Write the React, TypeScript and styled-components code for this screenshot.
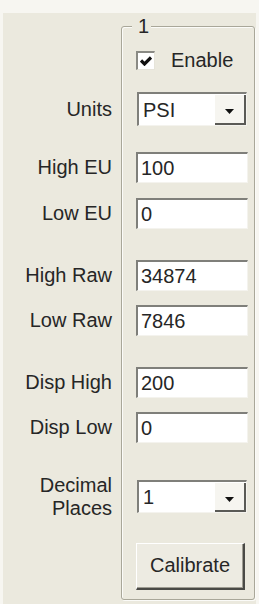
import React from "react";
import styled, { createGlobalStyle } from "styled-components";

const Global = createGlobalStyle`
  html, body { margin: 0; padding: 0; background: #f7f6f1; }
  body { font-family: "Liberation Sans", Arial, sans-serif; }
`;

const Panel = styled.div`
  margin: 13px 0 0 3px;
  width: 253px;
  height: 591px;
  box-sizing: border-box;
  padding-top: 13px;
  background: #ebe9de;
  display: flex;
  align-items: flex-start;
  font-family: "Liberation Sans", Arial, sans-serif;
  font-size: 20px;
  color: #262626;
`;

const LabelColumn = styled.div`
  width: 118px;
  padding-top: 1px;
  display: flex;
  flex-direction: column;
`;

const Frame = styled.div`
  position: relative;
  width: 134px;
  box-sizing: border-box;
  border: 1px solid #a9a799;
  border-radius: 3px;
  box-shadow: inset 1px 1px 0 #fbfbf8, 1px 1px 0 #fbfbf8;
  padding: 0 0 9px 14px;
  display: flex;
  flex-direction: column;
`;

const Legend = styled.span`
  position: absolute;
  left: 10px;
  top: -13px;
  padding: 0 2px 0 6px;
  background: #ebe9de;
  line-height: 24px;
`;

const Row = styled.div<{ $gap: number; $h: number }>`
  margin-top: ${(p) => p.$gap}px;
  height: ${(p) => p.$h}px;
  display: flex;
  align-items: center;
`;

const LabelRow = styled(Row)`
  justify-content: flex-end;
  padding-right: 9px;
  text-align: right;
  white-space: pre-line;
  line-height: 23px;
`;

const CheckRow = styled.label`
  display: flex;
  align-items: center;
  gap: 16px;
  margin-left: 0px;
`;

const CheckBox = styled.span`
  width: 19px;
  height: 19px;
  box-sizing: border-box;
  background: #fff;
  border-top: 2px solid #8a8a84;
  border-left: 2px solid #8a8a84;
  border-right: 1px solid #e6e4da;
  border-bottom: 1px solid #e6e4da;
  display: flex;
  align-items: center;
  justify-content: center;
`;

const TextBox = styled.div`
  width: 112px;
  height: 31px;
  box-sizing: border-box;
  background: #fff;
  border-top: 2px solid #7f7f7a;
  border-left: 2px solid #7f7f7a;
  border-right: 1px solid #f4f3ee;
  border-bottom: 1px solid #f4f3ee;
  display: flex;
  align-items: center;
  padding-left: 3px;
  line-height: 1;
`;

const Combo = styled(TextBox)<{ $h: number }>`
  width: 110px;
  height: ${(p) => p.$h}px;
  margin-left: 1px;
  padding-left: 4px;
  justify-content: space-between;
  padding-right: 0;
  padding-bottom: 0;
  align-items: stretch;
`;

const ComboText = styled.span`
  display: flex;
  align-items: center;
`;

const DropButton = styled.span`
  width: 31px;
  margin: 1px 0 0 0;
  box-sizing: border-box;
  background: #f6f5f0;
  border-right: 2px solid #5a5a56;
  border-bottom: 2px solid #5a5a56;
  display: flex;
  align-items: center;
  justify-content: center;
  padding-top: 5px;
`;

const Button = styled.button`
  width: 109px;
  height: 47px;
  box-sizing: border-box;
  background: #edebe2;
  font: inherit;
  color: #262626;
  border-top: 1px solid #ffffff;
  border-left: 1px solid #ffffff;
  border-right: 2px solid #4a4a46;
  border-bottom: 2px solid #4a4a46;
  box-shadow: inset -1px -1px 0 #9e9c92;
  padding: 0 0 2px 0;
`;

type RowSpec = {
  label: string;
  gap: number;
  h: number;
  kind: "check" | "combo" | "text" | "button";
  value?: string;
};

const rows: RowSpec[] = [
  { label: "", gap: 24, h: 19, kind: "check", value: "Enable" },
  { label: "Units", gap: 22, h: 34, kind: "combo", value: "PSI" },
  { label: "High EU", gap: 26, h: 31, kind: "text", value: "100" },
  { label: "Low EU", gap: 15, h: 31, kind: "text", value: "0" },
  { label: "High Raw", gap: 31, h: 31, kind: "text", value: "34874" },
  { label: "Low Raw", gap: 14, h: 31, kind: "text", value: "7846" },
  { label: "Disp High", gap: 31, h: 31, kind: "text", value: "200" },
  { label: "Disp Low", gap: 14, h: 31, kind: "text", value: "0" },
  { label: "Decimal\nPlaces", gap: 37, h: 33, kind: "combo", value: "1" },
  { label: "", gap: 30, h: 47, kind: "button", value: "Calibrate" },
];

const Arrow = () => (
  <svg width="9" height="5" viewBox="0 0 9 5">
    <path d="M0 0 H9 L4.5 5 Z" fill="#111" />
  </svg>
);

const Check = () => (
  <svg width="12" height="10" viewBox="0 0 12 10">
    <path d="M1 4.5 L4.5 8 L11 1.5" stroke="#111" strokeWidth="3.2" fill="none" />
  </svg>
);

function Control({ spec }: { spec: RowSpec }) {
  switch (spec.kind) {
    case "check":
      return (
        <CheckRow>
          <CheckBox>
            <Check />
          </CheckBox>
          {spec.value}
        </CheckRow>
      );
    case "combo":
      return (
        <Combo $h={spec.h}>
          <ComboText>{spec.value}</ComboText>
          <DropButton>
            <Arrow />
          </DropButton>
        </Combo>
      );
    case "text":
      return <TextBox>{spec.value}</TextBox>;
    case "button":
      return <Button>{spec.value}</Button>;
  }
}

export default function App() {
  return (
    <>
      <Global />
      <Panel>
        <LabelColumn>
          {rows.map((r, i) => (
            <LabelRow key={i} $gap={r.gap} $h={r.h}>
              {r.label}
            </LabelRow>
          ))}
        </LabelColumn>
        <Frame>
          <Legend>1</Legend>
          {rows.map((r, i) => (
            <Row key={i} $gap={r.gap} $h={r.h}>
              <Control spec={r} />
            </Row>
          ))}
        </Frame>
      </Panel>
    </>
  );
}
